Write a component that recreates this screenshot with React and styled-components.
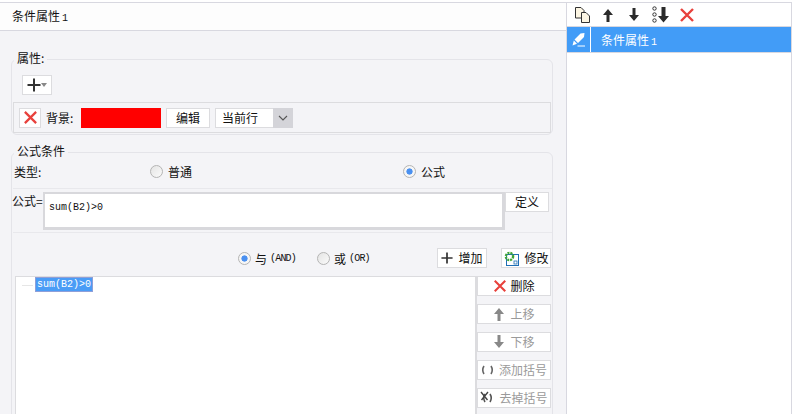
import React from 'react';
import styled, { createGlobalStyle } from 'styled-components';

const GlobalStyle = createGlobalStyle`
  html, body {
    margin: 0;
    padding: 0;
    background: #fff;
  }
  body {
    font-family: "Noto Sans CJK SC", "Liberation Sans", sans-serif;
    font-size: 12px;
    color: #111;
  }
`;

const Page = styled.div`
  width: 802px;
  height: 414px;
  display: flex;
  overflow: hidden;
  background: #fff;
  padding-top: 2px;
  box-sizing: border-box;
`;

const LeftPane = styled.div`
  width: 566px;
  height: 412px;
  flex: none;
  background: #f4f4f7;
  border-top: 1px solid #d8d8e0;
  box-sizing: border-box;
  overflow: hidden;
`;

const Header = styled.div`
  height: 27px;
  background: #fdfdfd;
  border-bottom: 1px solid #d8d8e0;
  padding-left: 12px;
  line-height: 25px;
  font-size: 12px;
`;

const Num = styled.span`
  font-family: "Liberation Mono", monospace;
  font-size: 10px;
  margin-left: ${p => p.$gap || 0}px;
`;

const Section = styled.fieldset`
  width: 542px;
  margin: ${p => p.$top}px 0 0 11px;
  padding: ${p => p.$pad};
  box-sizing: border-box;
  height: ${p => p.$height}px;
  border: 1px solid #e4e4e9;
  border-radius: 6px;
  min-width: 0;
`;

const Legend = styled.legend`
  margin-left: ${p => p.$left}px;
  padding: 0 3px 2px;
  font-size: 12px;
  line-height: 16px;
  height: 16px;
  box-sizing: content-box;
`;

const Btn = styled.button`
  display: flex;
  align-items: center;
  justify-content: center;
  gap: ${p => p.$gap || 0}px;
  box-sizing: border-box;
  width: ${p => p.$w}px;
  height: 20px;
  padding: 0 0 1px;
  flex: none;
  background: #fff;
  border: 1px solid #dcdcdf;
  border-radius: 0;
  font: inherit;
  font-size: 12px;
  color: ${p => (p.$off ? '#9a9a9a' : '#111')};
`;

const PlusBtn = styled(Btn)`
  margin-left: 10px;
`;

const StyleRow = styled.div`
  margin: 7px 0 0 1px;
  width: 538px;
  height: 31px;
  box-sizing: border-box;
  border: 1px solid #dcdcdf;
  display: flex;
  align-items: center;
  padding-left: 5px;
`;

const Caption = styled.span`
  margin: 0 7px 0 5px;
  width: 28px;
  white-space: nowrap;
`;

const Swatch = styled.div`
  width: 80px;
  height: 20px;
  background: #ff0000;
  margin-right: 5px;
`;

const Select = styled.div`
  margin-left: 5px;
  width: 78px;
  height: 20px;
  box-sizing: border-box;
  display: flex;
  background: #fff;
  border: 1px solid #dcdcdf;
  border-right: 0;
  line-height: 17px;
  padding-left: 6px;
`;

const SelectText = styled.span`
  flex: 1;
`;

const SelectArrow = styled.div`
  width: 20px;
  margin: -1px 0;
  background: #d4d4d9;
  display: flex;
  align-items: center;
  justify-content: center;
`;

const TypeRow = styled.div`
  height: 21px;
  padding-bottom: 6px;
  display: flex;
  align-items: center;
  border-bottom: 1px solid #e8e8ec;
`;

const TypeLabel = styled.span`
  width: 136px;
  margin-left: 1px;
  flex: none;
`;

const Radio = styled.span`
  width: 11px;
  height: 11px;
  flex: none;
  border-radius: 50%;
  border: 1px solid #b4b4b4;
  background: ${p => (p.$on ? 'radial-gradient(circle, #4a90f0 0 2.8px, #f6f6f6 3.4px)' : 'linear-gradient(135deg, #e4e4e4, #fafafa)')};
  margin-right: 4px;
`;

const TypeOption = styled.label`
  display: flex;
  align-items: center;
  gap: 1px;
  width: ${p => p.$w}px;
  flex: none;
`;

const FormulaRow = styled.div`
  display: flex;
  align-items: flex-start;
  height: 44px;
  padding-top: 3px;
  box-sizing: border-box;
  border-bottom: 1px solid #e8e8ec;
`;

const FormulaLabel = styled.span`
  width: 31px;
  flex: none;
  margin-left: -1px;
  white-space: nowrap;
`;

const FormulaBox = styled.div`
  width: 462px;
  height: 38px;
  box-sizing: border-box;
  background: #fff;
  border: solid #d8d8dc;
  border-width: 2px 3px 3px 2px;
  padding: 2px 4px;
  flex: none;
`;

const Code = styled.span`
  font-family: "Liberation Mono", monospace;
  font-size: 10px;
  line-height: 13px;
  display: inline-block;
  color: ${p => (p.$selected ? '#fff' : '#111')};
  background: ${p => (p.$selected ? '#4a9cf6' : 'transparent')};
  outline: ${p => (p.$selected ? '1px solid #8f9fd8' : 'none')};
  outline-offset: -1px;
  padding: ${p => (p.$selected ? '1px 2px' : '0')};
`;

const LogicRow = styled.div`
  height: 43px;
  display: flex;
  align-items: center;
  padding: 7px 0 0 225px;
  box-sizing: border-box;
`;

const Latin = styled.span`
  font-family: "Liberation Mono", monospace;
  font-size: 10px;
  letter-spacing: -0.8px;
  margin-left: 3px;
`;

const LogicOption = styled.label`
  display: flex;
  align-items: center;
  width: ${p => p.$w}px;
  flex: none;
`;

const LogicButtons = styled.div`
  display: flex;
  gap: 14px;
`;

const TreeArea = styled.div`
  display: flex;
  margin-left: 2px;
`;

const Tree = styled.div`
  width: 462px;
  height: 160px;
  box-sizing: border-box;
  background: #fff;
  border: 1px solid #dcdcdf;
  border-right-width: 2px;
  padding-left: 6px;
  display: flex;
  align-items: flex-start;
  flex: none;
`;

const TreeDash = styled.span`
  width: 11px;
  height: 1px;
  margin: 8px 2px 0 0;
  background: #e6e6e6;
`;

const SideButtons = styled.div`
  display: flex;
  flex-direction: column;
  gap: 8px;
`;

const RightPane = styled.div`
  width: 226px;
  height: 412px;
  flex: none;
  box-sizing: border-box;
  margin-left: 0;
  border: solid #d8d8e0;
  border-width: 1px 1px 0 1px;
`;

const Toolbar = styled.div`
  height: 23px;
  display: flex;
  align-items: center;
  padding-left: 7px;
  border-bottom: 1px solid #d8d8e0;
`;

const ToolIcon = styled.span`
  display: flex;
  width: ${p => p.$w || 26}px;
  justify-content: flex-start;
`;

const ListRow = styled.div`
  height: 25px;
  display: flex;
  align-items: center;
  background: #429cf7;
  color: #fff;
  border-bottom: 1px solid #d8d8e0;
  margin-top: 0;
`;

const RowIcon = styled.div`
  width: 24px;
  height: 25px;
  flex: none;
  border-right: 1px solid #fff;
  box-sizing: border-box;
  display: flex;
  align-items: center;
  justify-content: center;
`;

const RowText = styled.span`
  margin-left: 10px;
`;

const CloseIcon = ({ size = 16 }) => (
  <svg width={size} height={size} viewBox="0 0 16 16">
    <path d="M2 2 L14 14 M14 2 L2 14" stroke="#e8413c" strokeWidth="2.4" fill="none" />
  </svg>
);

const PlusIcon = ({ size = 14, color = '#333' }) => (
  <svg width={size} height={size} viewBox="0 0 14 14">
    <path d="M7 0.5 V13.5 M0.5 7 H13.5" stroke={color} strokeWidth="2" fill="none" />
  </svg>
);

const UpIcon = ({ color = '#2b2b2b' }) => (
  <svg width="12" height="14" viewBox="0 0 12 14">
    <path d="M6 1 L11 7 H7.5 V14 H4.5 V7 H1 Z" fill={color} />
  </svg>
);

const DownIcon = ({ color = '#2b2b2b' }) => (
  <svg width="12" height="14" viewBox="0 0 12 14">
    <path d="M6 13 L11 7 H7.5 V0 H4.5 V7 H1 Z" fill={color} />
  </svg>
);

const CopyIcon = () => (
  <svg width="17" height="17" viewBox="0 0 17 17">
    <path d="M1.5 1.5 H7 L10 4.5 V12 H1.5 Z" fill="#fdf6e3" stroke="#333" />
    <path d="M7.5 6.5 H12 L15.5 10 V16.5 H7.5 Z" fill="#fdf6e3" stroke="#333" />
  </svg>
);

const MoveBottomIcon = () => (
  <svg width="18" height="17" viewBox="0 0 18 17">
    <circle cx="2.5" cy="2.5" r="1.7" fill="none" stroke="#333" />
    <circle cx="2.5" cy="8.5" r="1.7" fill="none" stroke="#333" />
    <circle cx="2.5" cy="14.5" r="1.7" fill="none" stroke="#333" />
    <path d="M11.5 16.5 L17 10 H13.5 V1 H9.5 V10 H6 Z" fill="#2b2b2b" />
  </svg>
);

const PenIcon = () => (
  <svg width="15" height="15" viewBox="0 0 15 15">
    <path d="M3.5 7.5 L9.5 1.5 L13.5 1 L13 5 L7 11 Z M2.8 8.5 L6 11.7 L1.5 13.5 Z" fill="#fff" />
    <path d="M6.5 14 H14" stroke="#fff" strokeWidth="1" />
  </svg>
);

const ChevronIcon = () => (
  <svg width="10" height="6" viewBox="0 0 10 6">
    <path d="M1 1 L5 5 L9 1" stroke="#555" strokeWidth="1.1" fill="none" />
  </svg>
);

const GearIcon = () => (
  <svg width="16" height="16" viewBox="0 0 16 16">
    <rect x="3.5" y="4.5" width="12" height="11" fill="#fff" stroke="#1f6fb5" />
    <circle cx="6.5" cy="6.5" r="3.6" fill="none" stroke="#3fa535" strokeWidth="2.4" strokeDasharray="2 0.9" />
    <rect x="11" y="11" width="3" height="3" fill="#fff" stroke="#1f6fb5" strokeWidth="0.8" />
  </svg>
);

const ParenIcon = () => (
  <svg width="13" height="10" viewBox="0 0 13 10">
    <path d="M3 1 Q0.5 5 3 9 M10 1 Q12.5 5 10 9" stroke="#666" strokeWidth="1.6" fill="none" />
  </svg>
);

const ParenRemoveIcon = () => (
  <svg width="14" height="14" viewBox="0 0 14 14">
    <path d="M5 3 Q2.5 7 5 11 M10 3 Q12.5 7 10 11" stroke="#555" strokeWidth="1.6" fill="none" />
    <path d="M1 1 L7.5 9 M8 1 L1.5 9" stroke="#444" strokeWidth="1.4" fill="none" />
  </svg>
);

export default function App() {
  return (
    <>
      <GlobalStyle />
      <Page>
        <LeftPane>
          <Header>条件属性<Num $gap={2}>1</Num></Header>

          <Section $top={19} $height={85} $pad="7px 0 0 0">
            <Legend $left={2}>属性:</Legend>
            <PlusBtn $w={30}>
              <PlusIcon />
              <svg width="6" height="4" viewBox="0 0 6 4"><path d="M0 0 H6 L3 4 Z" fill="#888" /></svg>
            </PlusBtn>
            <StyleRow>
              <Btn $w={22}><CloseIcon size={15} /></Btn>
              <Caption>背景:</Caption>
              <Swatch />
              <Btn $w={44}>编辑</Btn>
              <Select>
                <SelectText>当前行</SelectText>
                <SelectArrow><ChevronIcon /></SelectArrow>
              </Select>
            </StyleRow>
          </Section>

          <Section $top={8} $height={300} $pad="0 0 0 1px">
            <Legend $left={1}>公式条件</Legend>
            <TypeRow>
              <TypeLabel>类型:</TypeLabel>
              <TypeOption $w={253}><Radio />普通</TypeOption>
              <TypeOption $w={60}><Radio $on />公式</TypeOption>
            </TypeRow>
            <FormulaRow>
              <FormulaLabel>公式=</FormulaLabel>
              <FormulaBox><Code>sum(B2)&gt;0</Code></FormulaBox>
              <Btn $w={44}>定义</Btn>
            </FormulaRow>
            <LogicRow>
              <LogicOption $w={79}><Radio $on />与<Latin>(AND)</Latin></LogicOption>
              <LogicOption $w={120}><Radio />或<Latin>(OR)</Latin></LogicOption>
              <LogicButtons>
                <Btn $w={50} $gap={5}><PlusIcon size={12} />增加</Btn>
                <Btn $w={50} $gap={5}><GearIcon />修改</Btn>
              </LogicButtons>
            </LogicRow>
            <TreeArea>
              <Tree>
                <TreeDash />
                <Code $selected>sum(B2)&gt;0</Code>
              </Tree>
              <SideButtons>
                <Btn $w={74} $gap={3}><CloseIcon size={14} />删除</Btn>
                <Btn $w={74} $gap={5} $off><UpIcon color="#888" />上移</Btn>
                <Btn $w={74} $gap={5} $off><DownIcon color="#888" />下移</Btn>
                <Btn $w={74} $gap={5} $off><ParenIcon />添加括号</Btn>
                <Btn $w={74} $gap={5} $off><ParenRemoveIcon />去掉括号</Btn>
              </SideButtons>
            </TreeArea>
          </Section>
        </LeftPane>

        <RightPane>
          <Toolbar>
            <ToolIcon $w={28}><CopyIcon /></ToolIcon>
            <ToolIcon><UpIcon /></ToolIcon>
            <ToolIcon $w={24}><DownIcon /></ToolIcon>
            <ToolIcon $w={27}><MoveBottomIcon /></ToolIcon>
            <ToolIcon><CloseIcon /></ToolIcon>
          </Toolbar>
          <ListRow>
            <RowIcon><PenIcon /></RowIcon>
            <RowText>条件属性<Num $gap={2}>1</Num></RowText>
          </ListRow>
        </RightPane>
      </Page>
    </>
  );
}
